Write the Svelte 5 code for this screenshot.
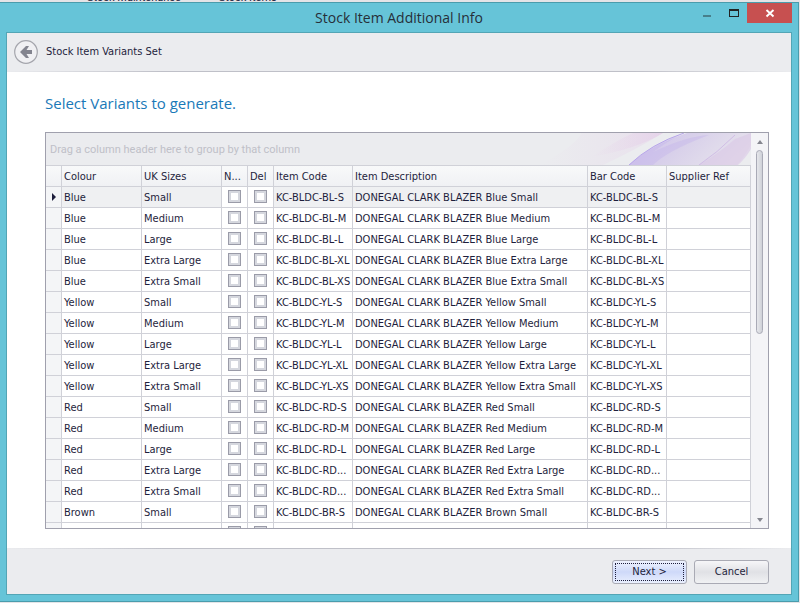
<script lang="ts">
	type Variant = {
		colour: string;
		size: string;
		code: string;
		description: string;
	};

	const colours = [
		{ name: 'Blue', code: 'BL' },
		{ name: 'Yellow', code: 'YL' },
		{ name: 'Red', code: 'RD' },
		{ name: 'Brown', code: 'BR' },
	];

	const sizes = [
		{ name: 'Small', code: 'S' },
		{ name: 'Medium', code: 'M' },
		{ name: 'Large', code: 'L' },
		{ name: 'Extra Large', code: 'XL' },
		{ name: 'Extra Small', code: 'XS' },
	];

	function shorten(code: string) {
		return /-RD-X[LS]$/.test(code) ? code.slice(0, 10) + '...' : code;
	}

	const variants: Variant[] = colours.flatMap((colour) =>
		sizes.map((size) => ({
			colour: colour.name,
			size: size.name,
			code: shorten(`KC-BLDC-${colour.code}-${size.code}`),
			description: `DONEGAL CLARK BLAZER ${colour.name} ${size.name}`,
		}))
	);

	let selected = $state(0);
</script>

<div class="desktop">
	<div class="behind" aria-hidden="true">
		<span>Stock Maintenance</span>
		<span>&gt;</span>
		<span>Stock Items</span>
	</div>

	<div class="window" role="dialog" aria-labelledby="window-title">
		<header class="titlebar">
			<h1 id="window-title">Stock Item Additional Info</h1>
			<div class="window-buttons">
				<button class="window-btn" aria-label="Minimise">
					<svg width="10" height="14" viewBox="0 0 10 14"><path d="M1 9h8v2H1z" fill="#477f8b" /></svg>
				</button>
				<button class="window-btn" aria-label="Maximise">
					<svg width="10" height="14" viewBox="0 0 10 14"><path d="M0 3h10v8H0zM1 5v5h8V5z" fill="#222" fill-rule="evenodd" /></svg>
				</button>
				<button class="window-btn close" aria-label="Close">
					<svg width="10" height="14" viewBox="0 0 10 14"><path d="M1.500 4l7 6.500M8.500 4l-7 6.500" stroke="#fff" stroke-width="1.900" /></svg>
				</button>
			</div>
		</header>

		<div class="client">
			<div class="wizard-header">
				<button class="back" aria-label="Back">
					<svg width="24" height="24" viewBox="0 0 24 24">
						<circle cx="12" cy="12" r="11.300" fill="#f0f0f3" stroke="#a5a6ad" stroke-width="1.200" />
						<path d="M6 12l6-6h3l-2.500 4H18v4h-5.500l2.500 4h-3z" fill="#83848f" />
					</svg>
				</button>
				<span>Stock Item Variants Set</span>
			</div>

			<main>
				<h2>Select Variants to generate.</h2>
				<div class="grid">
					<div class="grid-view">
						<div class="group-panel">
							<svg class="swirl" width="210" height="32" viewBox="0 0 210 32">
								<defs>
									<linearGradient id="pink" x1="0" x2="1">
										<stop offset="0" stop-color="#e6cfe8" stop-opacity="0" />
										<stop offset="1" stop-color="#e4cbe8" />
									</linearGradient>
									<linearGradient id="violet" x1="0" y1="0" x2="1" y2="0.300">
										<stop offset="0" stop-color="#cdbfee" />
										<stop offset="0.500" stop-color="#d8d0ea" />
										<stop offset="1" stop-color="#e6e2ec" />
									</linearGradient>
								</defs>
								<path d="M0 32Q40 8 40 0h82Q98 15 62 32z" fill="url(#pink)" opacity="0.350" />
								<path d="M50 24Q75 8 92 0h30Q96 16 50 24z" fill="url(#pink)" opacity="0.600" />
								<path d="M88 32Q110 12 146 0h64v12Q202 26 196 32z" fill="url(#violet)" />
								<path d="M88 32Q108 12 140 1Q126 9 112 19Q146 3 168 2Q126 18 112 32z" fill="#bfaeea" opacity="0.350" />
								<path d="M88 32Q110 11 143 0" fill="none" stroke="#b7a5ea" />
								<path d="M158 32Q178 20 194 6L210 0v16Q204 26 197 32z" fill="#d8c4e6" opacity="0.550" />
								<path d="M158 32Q176 20 194 2" fill="none" stroke="#c9afe3" opacity="0.700" />
							</svg>
							<span>Drag a column header here to group by that column</span>
						</div>
						<div class="rows">
							<table>
								<colgroup>
									<col class="w-indicator" />
									<col class="w-text" />
									<col class="w-text" />
									<col class="w-check" />
									<col class="w-check" />
									<col class="w-code" />
									<col />
									<col class="w-code" />
									<col class="w-supplier" />
								</colgroup>
								<thead>
									<tr>
										<th></th>
										<th>Colour</th>
										<th>UK Sizes</th>
										<th>N...</th>
										<th>Del</th>
										<th>Item Code</th>
										<th>Item Description</th>
										<th>Bar Code</th>
										<th>Supplier Ref</th>
									</tr>
								</thead>
								<tbody>
									{#each variants as variant, i}
										<tr class:selected={i === selected} onclick={() => (selected = i)}>
											<td class="indicator">
												{#if i === selected}
													<svg width="4" height="8" viewBox="0 0 4 8"><path d="M0 0l4 4-4 4z" fill="#1e1e3c" /></svg>
												{/if}
											</td>
											<td>{variant.colour}</td>
											<td>{variant.size}</td>
											<td class="check"><input type="checkbox" aria-label="New {variant.description}" /></td>
											<td class="check"><input type="checkbox" aria-label="Delete {variant.description}" /></td>
											<td>{variant.code}</td>
											<td>{variant.description}</td>
											<td>{variant.code}</td>
											<td></td>
										</tr>
									{/each}
								</tbody>
							</table>
						</div>
					</div>
					<div class="scrollbar">
						<button aria-label="Scroll up">
							<svg width="6" height="4" viewBox="0 0 6 4"><path d="M3 0l3 4H0z" fill="#85868f" /></svg>
						</button>
						<div class="track"><div class="thumb"></div></div>
						<button aria-label="Scroll down">
							<svg width="6" height="4" viewBox="0 0 6 4"><path d="M0 0h6L3 4z" fill="#85868f" /></svg>
						</button>
					</div>
				</div>
			</main>

			<footer>
				<button class="btn primary">Next &gt;</button>
				<button class="btn">Cancel</button>
			</footer>
		</div>
	</div>
</div>

<style>
	:global(body) {
		background: #e4e4e7;
	}

	.desktop {
		--line: #d0d1d8;
		--border: #a0a0ad;
		--panel: #ebecef;
		--text: #1e1e3c;
		display: flex;
		flex-direction: column;
		height: 100vh;
		padding: 0 1px 1px 0;
		box-sizing: border-box;
		overflow: hidden;
		font-family: 'DejaVu Sans Condensed', 'Noto Sans', sans-serif;
		font-size: 11px;
		line-height: 14px;
		color: var(--text);
	}

	.behind {
		display: flex;
		align-items: flex-end;
		gap: 16px;
		height: 2px;
		padding-left: 87px;
		font-family: Roboto, sans-serif;
		line-height: 8px;
		background: #e4e4e7;
		overflow: hidden;
	}

	.window {
		flex: 1;
		min-height: 0;
		display: flex;
		flex-direction: column;
		padding: 0 6px 6px;
		background: #66c4d8;
		border: 1px solid #4a9cac;
		border-left: 0;
	}

	.titlebar {
		display: grid;
		grid-template-columns: 1fr auto 1fr;
		height: 29px;
		flex: none;
	}

	.titlebar h1 {
		grid-column: 2;
		margin: 0;
		font: 14px/29px 'Open Sans', sans-serif;
		color: #262f38;
	}

	.window-buttons {
		display: flex;
		justify-content: flex-end;
		align-items: flex-start;
	}

	button {
		padding: 0;
		border: 0;
		background: none;
		font: inherit;
		color: inherit;
	}

	.window-btn {
		display: flex;
		align-items: center;
		justify-content: center;
		width: 27px;
		height: 20px;
	}

	.window-btn.close {
		width: 45px;
		background: #c75050;
	}

	.client {
		flex: 1;
		min-height: 0;
		display: flex;
		flex-direction: column;
		background: #fff;
		border: 1px solid #53a5b5;
	}

	.wizard-header {
		display: flex;
		align-items: center;
		gap: 8px;
		height: 38px;
		flex: none;
		padding: 0 7px;
		background: var(--panel);
		border-bottom: 1px solid;
		border-image: linear-gradient(90deg, #ebecef, #bfc0c8 20%, #bfc0c8 80%, #ebecef) 1;
	}

	.back {
		display: flex;
	}

	main {
		flex: 1;
		min-height: 0;
		display: flex;
		flex-direction: column;
		padding: 19px 22px 19px 38px;
	}

	h2 {
		margin: 0 0 17px;
		font: 15px/24px 'Open Sans', sans-serif;
		color: #1979b8;
	}

	.grid {
		flex: 1;
		min-height: 0;
		display: flex;
		border: 1px solid var(--border);
	}

	.grid-view {
		flex: 1;
		min-width: 0;
		display: flex;
		flex-direction: column;
	}

	.group-panel {
		position: relative;
		flex: none;
		padding: 2px 4px 0;
		background: var(--panel);
		border-bottom: 1px solid var(--line);
		font-family: Roboto, sans-serif;
		line-height: 30px;
		color: #bfc0c8;
	}

	.swirl {
		position: absolute;
		top: 0;
		right: 0;
	}

	.rows {
		flex: 1;
		min-height: 0;
		overflow: hidden;
	}

	table {
		width: 100%;
		table-layout: fixed;
		border-collapse: separate;
		border-spacing: 0;
	}

	.w-indicator {
		width: 16px;
	}

	.w-text {
		width: 80px;
	}

	.w-check {
		width: 26px;
	}

	.w-code {
		width: 79px;
	}

	.w-supplier {
		width: 84px;
	}

	th,
	td {
		height: 21px;
		box-sizing: border-box;
		padding: 2px 0 0 2px;
		border-right: 1px solid var(--line);
		border-bottom: 1px solid var(--line);
		font-weight: normal;
		text-align: left;
		white-space: nowrap;
		overflow: hidden;
	}

	th {
		background: linear-gradient(#f8f9fa, #f0f1f4);
	}

	.selected td {
		background: #eff0f2;
	}

	td.indicator {
		padding: 0 0 0 6px;
		background: #f4f5f7;
	}

	td svg,
	td input {
		display: block;
	}

	td.check {
		padding: 0 6px 1px;
	}

	.selected td.check {
		background: #fff;
	}

	td input {
		appearance: none;
		width: 13px;
		height: 13px;
		margin: 0;
		box-sizing: border-box;
		border: 1px solid #9a9ba8;
		background: #fff;
		box-shadow: inset 0 0 0 2px #d5d7de;
	}

	td input:checked {
		background: #5a5b6e;
	}

	.scrollbar {
		display: flex;
		flex-direction: column;
		width: 17px;
		background: #f4f4f7;
	}

	.scrollbar button {
		display: flex;
		align-items: center;
		justify-content: center;
		height: 17px;
	}

	.track {
		flex: 1;
		display: flex;
		justify-content: center;
	}

	.thumb {
		width: 7px;
		height: 51%;
		box-sizing: border-box;
		border: 1px solid #a9aab6;
		border-radius: 4px;
		background: linear-gradient(90deg, #e6e7eb, #cfd1d8);
	}

	footer {
		display: flex;
		justify-content: flex-end;
		gap: 7px;
		flex: none;
		padding: 11px 22px 10px;
		background: var(--panel);
		border-top: 1px solid;
		border-image: linear-gradient(90deg, #ebecef, #bfc0c8 20%, #bfc0c8 80%, #ebecef) 1;
	}

	.btn {
		width: 75px;
		height: 24px;
		box-sizing: border-box;
		border: 1px solid #a9aab4;
		border-radius: 3px;
		background: linear-gradient(#f6f6f8, #e0e1e5 50%, #f0f1f3);
	}

	.btn.primary {
		background: linear-gradient(#eef2fe, #ced9f9 50%, #e9effe);
		outline: 1px dotted var(--text);
		outline-offset: -4px;
	}
</style>
